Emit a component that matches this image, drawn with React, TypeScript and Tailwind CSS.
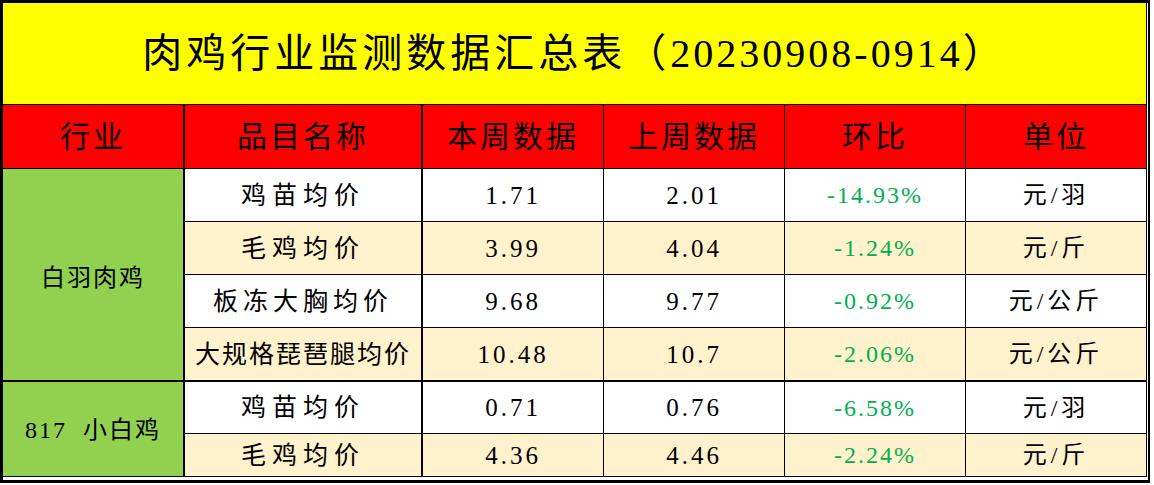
import React from "react";

type Row = {
  name: string;
  nameTrack: string;
  cur: string;
  prev: string;
  ratio: string;
  unit: string;
  bg: string;
  last?: boolean;
};

const rows: Row[] = [
  { name: "鸡苗均价", nameTrack: "tracking-[6px]", cur: "1.71", prev: "2.01", ratio: "-14.93%", unit: "元/羽", bg: "bg-white" },
  { name: "毛鸡均价", nameTrack: "tracking-[6px]", cur: "3.99", prev: "4.04", ratio: "-1.24%", unit: "元/斤", bg: "bg-[#fff2cc]" },
  { name: "板冻大胸均价", nameTrack: "tracking-[5px]", cur: "9.68", prev: "9.77", ratio: "-0.92%", unit: "元/公斤", bg: "bg-white" },
  { name: "大规格琵琶腿均价", nameTrack: "tracking-[2px]", cur: "10.48", prev: "10.7", ratio: "-2.06%", unit: "元/公斤", bg: "bg-[#fff2cc]", last: true },
  { name: "鸡苗均价", nameTrack: "tracking-[6px]", cur: "0.71", prev: "0.76", ratio: "-6.58%", unit: "元/羽", bg: "bg-white" },
  { name: "毛鸡均价", nameTrack: "tracking-[6px]", cur: "4.36", prev: "4.46", ratio: "-2.24%", unit: "元/斤", bg: "bg-[#fff2cc]" },
];

const headers = [
  { text: "行业", cls: "border-r-2" },
  { text: "品目名称", cls: "border-r-2" },
  { text: "本周数据", cls: "border-r" },
  { text: "上周数据", cls: "border-r" },
  { text: "环比", cls: "border-r" },
  { text: "单位", cls: "border-r" },
];

const cjk = "font-['Liberation_Serif','Noto_Sans_CJK_SC',serif]";

export default function App() {
  return (
    <div className="bg-white w-[1154px] h-[485px]">
      <div className="w-[1150px] h-[483px] border-t-[3px] border-l-[3px] border-r-2 border-b-[3px] border-black pr-px pb-[3px] bg-white">
        <div
          className={`grid grid-cols-[182px_238px_181px_181px_181px_181px] grid-rows-[102px_64px_53px_53px_53px_54px_52px_43px] text-black ${cjk}`}
        >
          {/* title */}
          <div className="col-span-6 bg-[#ffff00] border-r border-b border-black flex items-center justify-center">
            <span className="text-[40px] tracking-[4px] leading-none">
              肉鸡行业监测数据汇总表（<span className="tracking-[3px]">20230908-0914</span>）
            </span>
          </div>

          {/* header */}
          {headers.map((h) => (
            <div
              key={h.text}
              className={`bg-[#ff0000] border-b border-black flex items-center justify-center ${h.cls}`}
            >
              <span className="text-[30px] tracking-[3px] leading-none">{h.text}</span>
            </div>
          ))}

          {/* group: 白羽肉鸡 */}
          <div className="row-span-4 bg-[#92d050] border-r-2 border-b-2 border-black flex items-center justify-center">
            <span className="text-[24px] tracking-[2px] leading-none mt-[6px]">白羽肉鸡</span>
          </div>
          {rows.slice(0, 4).map((r, i) => (
            <DataRow key={i} r={r} />
          ))}

          {/* group: 817 小白鸡 */}
          <div className="row-span-2 bg-[#92d050] border-r-2 border-b border-black flex items-center justify-center">
            <span className="text-[24px] tracking-[2px] leading-none mt-[2px]">817&nbsp;&nbsp;小白鸡</span>
          </div>
          {rows.slice(4).map((r, i) => (
            <DataRow key={i + 4} r={r} />
          ))}
        </div>
      </div>
    </div>
  );
}

function DataRow({ r }: { r: Row }) {
  const b = r.last ? "border-b-2" : "border-b";
  return (
    <>
      <div className={`${r.bg} ${b} border-r-2 border-black flex items-center justify-center`}>
        <span className={`text-[25px] leading-none ${r.nameTrack}`}>{r.name}</span>
      </div>
      <div className={`${r.bg} ${b} border-r border-black flex items-center justify-center`}>
        <span className="text-[25px] tracking-[3px] leading-none">{r.cur}</span>
      </div>
      <div className={`${r.bg} ${b} border-r border-black flex items-center justify-center`}>
        <span className="text-[25px] tracking-[3px] leading-none">{r.prev}</span>
      </div>
      <div className={`${r.bg} ${b} border-r border-black flex items-center justify-center`}>
        <span className="text-[24px] tracking-[2px] leading-none text-[#00b050]">{r.ratio}</span>
      </div>
      <div className={`${r.bg} ${b} border-r border-black flex items-center justify-center`}>
        <span className="text-[24px] tracking-[4px] leading-none">{r.unit}</span>
      </div>
    </>
  );
}
